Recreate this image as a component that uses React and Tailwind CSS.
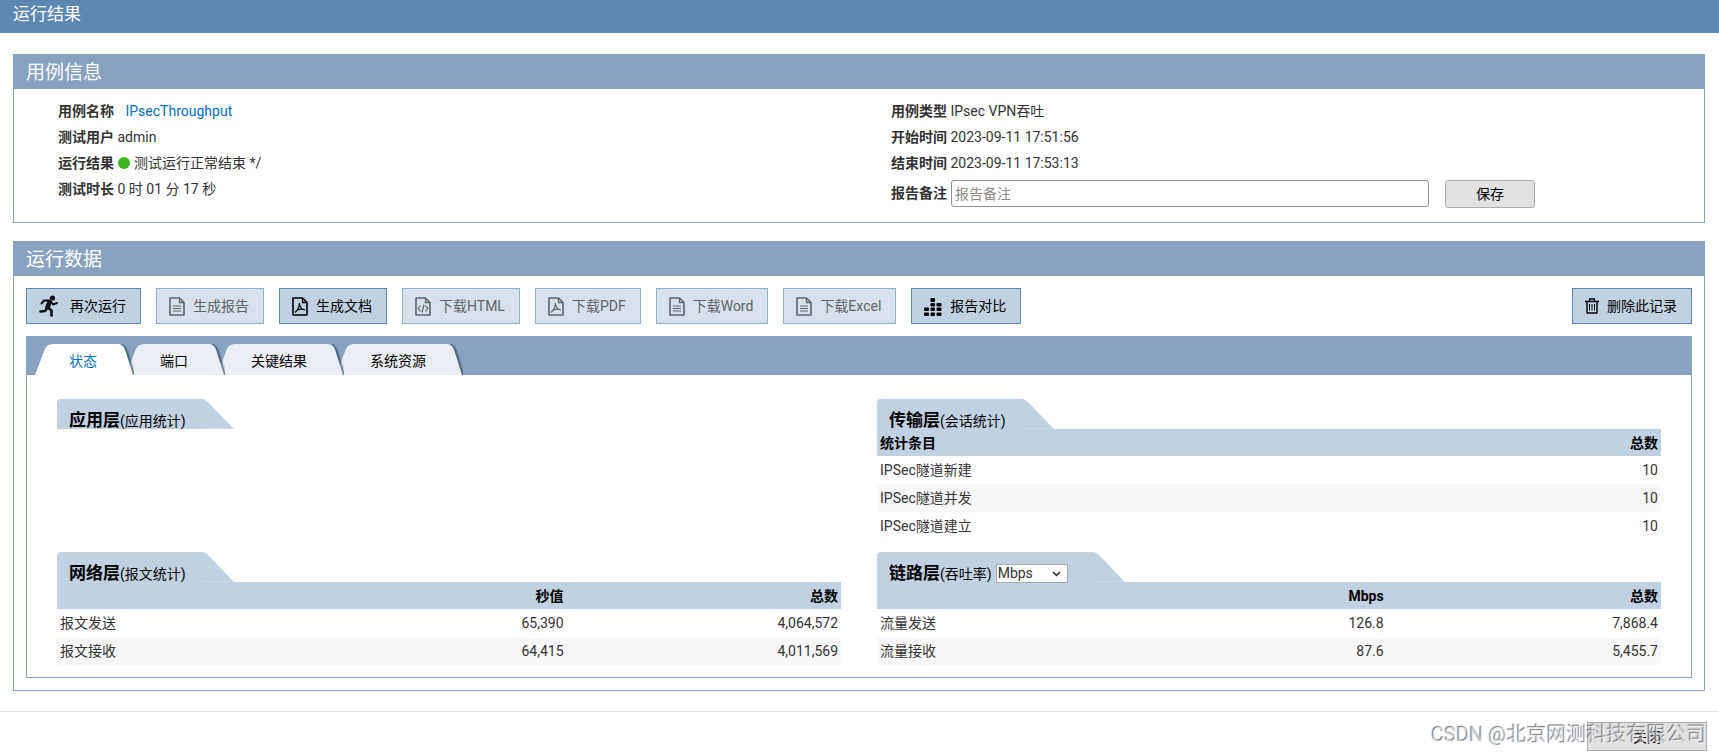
import {useState} from 'react'

const tabs = ['状态', '端口', '关键结果', '系统资源']
const tabLayers = ['z-40', 'z-30', 'z-20', 'z-10']

const actions = [
    {label: '再次运行', icon: <RunIcon/>, gap: 'gap-[11px]'},
    {label: '生成报告', icon: <FileIcon type="text"/>, disabled: true},
    {label: '生成文档', icon: <FileIcon type="pdf"/>},
    {label: '下载HTML', icon: <FileIcon type="code"/>, disabled: true},
    {label: '下载PDF', icon: <FileIcon type="pdf"/>, disabled: true},
    {label: '下载Word', icon: <FileIcon type="text"/>, disabled: true},
    {label: '下载Excel', icon: <FileIcon type="text"/>, disabled: true},
    {label: '报告对比', icon: <CompareIcon/>},
]

function RunIcon() {
    return (
        <svg width="20" height="22" viewBox="0 0 20 22" fill="none" stroke="#0b0f12" strokeLinecap="round" strokeLinejoin="round">
            <circle cx="13.500" cy="3" r="2.6" fill="#0b0f12" stroke="none"/>
            <path d="M10.500 7 L8.500 12.500" strokeWidth="4.6"/>
            <path d="M10 5.500 L5 5.500 L2.500 8.500" strokeWidth="2"/>
            <path d="M12 6.500 L14 9.500 L18 8" strokeWidth="2"/>
            <path d="M8 13 L6 16 L1.500 16.500" strokeWidth="2.600"/>
            <path d="M9 12.500 L12.500 15.500 L12.500 20.500" strokeWidth="2.600"/>
        </svg>
    )
}

function FileIcon({type}) {
    return (
        <svg width="16" height="19" viewBox="0 0 16 19" fill="none" stroke="currentColor">
            <path d="M1 1 H10.500 L15 5.500 V18 H1 Z" strokeWidth="1.600" strokeLinejoin="round"/>
            <path d="M10.500 1 V5.500 H15" strokeWidth="1.300"/>
            {type === 'text' && <path d="M4 9 H12 M4 11.500 H12 M4 14 H12" strokeWidth="1.200"/>}
            {type === 'code' && <path d="M5.500 8.500 L3.200 11.500 L5.500 14.500 M10.500 8.500 L12.800 11.500 L10.500 14.500 M9 7.500 L7 15.500" strokeWidth="1.200"/>}
            {type === 'pdf' && <path d="M7.500 6 C7.300 10 6 13 3 15.500 M7.500 7 C8 10 9.500 12.500 13 13 M5.500 13 C7.500 12 10 12 12.500 12.600" strokeWidth="1.200"/>}
        </svg>
    )
}

function CompareIcon() {
    return (
        <svg width="18" height="20" viewBox="0 -2 18 20" fill="#000">
            <rect x="0" y="9.500" width="5" height="3.500" rx="1"/>
            <rect x="0" y="14.500" width="5" height="3.500" rx="1"/>
            <rect x="6.500" y="0" width="4.500" height="4" rx="1"/>
            <rect x="6.500" y="5" width="4.500" height="3.500" rx="1"/>
            <rect x="6.500" y="9.500" width="4.500" height="3.500" rx="1"/>
            <rect x="6.500" y="14.500" width="4.500" height="3.500" rx="1"/>
            <rect x="12.500" y="5" width="5" height="3.500" rx="1"/>
            <rect x="12.500" y="9.500" width="5" height="3.500" rx="1"/>
            <rect x="12.500" y="14.500" width="5" height="3.500" rx="1"/>
        </svg>
    )
}

function TrashIcon() {
    return (
        <svg width="14" height="16" viewBox="0 0 14 16" fill="none" stroke="#000">
            <path d="M0 3.500 H14" strokeWidth="1.400"/>
            <path d="M4.500 3 V1 H9.500 V3" strokeWidth="1.300"/>
            <path d="M2 3.500 V15 H12 V3.500" strokeWidth="1.400" strokeLinejoin="round"/>
            <path d="M4.500 6 V12.500 M7 6 V12.500 M9.500 6 V12.500" strokeWidth="1"/>
        </svg>
    )
}

function ActionButton({label, icon, disabled, gap = 'gap-2'}) {
    return (
        <button
            type="button"
            disabled={disabled}
            className={`flex h-9 items-center border pl-3 pr-[14px] ${gap} ${
                disabled
                    ? 'border-[#92b0d0] bg-[#d8e1eb] text-[#606468]'
                    : 'border-[#5c87b0] bg-[#c2d1e1] text-black'
            }`}
        >
            {icon}
            <span>{label}</span>
        </button>
    )
}

function Panel({title, children}) {
    return (
        <section className="ml-[13px] mr-[14px] border border-[#87a3c1]">
            <h2 className="h-[34px] bg-[#87a3c1] px-3 text-[19px] leading-[36px] text-white">{title}</h2>
            {children}
        </section>
    )
}

function Tab({label, active, layer, onClick}) {
    return (
        <button
            type="button"
            role="tab"
            aria-selected={active}
            onClick={onClick}
            className={`relative -mr-2 flex h-[31px] items-stretch ${layer} ${active ? 'text-[#0070c0]' : 'text-black'}`}
        >
            <svg width="18" height="31" viewBox="0 0 18 31" fill={active ? '#fff' : '#ebeef4'}>
                <path d="M0 31 L9.500 6 Q11.500 0 18 0 V31 Z"/>
            </svg>
            <span className={`pl-4 pr-[19px] leading-[35px] ${active ? 'bg-white' : 'bg-[#ebeef4]'}`}>{label}</span>
            <svg width="18" height="31" viewBox="0 0 18 31" fill={active ? '#fff' : '#ebeef4'}>
                <path d="M5 1 Q9 2 11 8 L18.500 31" fill="none" stroke="#27415c" strokeWidth="4" opacity=".2"/>
                <path d="M5 1 Q8.500 2 10.500 8 L17.500 31" fill="none" stroke="#27415c" strokeWidth="2.500" opacity=".5"/>
                <path d="M0 0 H2 Q7.500 0 9.500 7 L17 31 H0 Z"/>
            </svg>
        </button>
    )
}

function Layer({title, note, control, columns, rows}) {
    return (
        <div>
            <div className="flex h-[30px]">
                <h3 className={`flex items-center gap-1 rounded-tl bg-[#c2d1e1] pl-3 pt-3 text-black ${control ? 'w-[216px]' : 'w-[145px]'}`}>
                    <span className="whitespace-nowrap leading-[18px]">
                        <b className="text-[17px]">{title}</b>({note})
                    </span>
                    {control}
                </h3>
                <svg width="32" height="30" viewBox="0 0 32 30">
                    <path d="M0 0 Q3 0 5.500 2.500 L32 30 H0 Z" fill="#c2d1e1"/>
                    <path d="M0 29.500 H32" stroke="#cddbe9"/>
                </svg>
            </div>
            {columns && (
                <table className="w-full table-fixed border-collapse">
                    <thead>
                        <tr className="h-[27px] bg-[#c2d1e1] text-black">
                            {columns.map((c, i) => (
                                <th key={i} className={`px-[3px] font-bold ${
                                    i === 0 ? 'text-left' : 'text-right'
                                } ${columns.length === 3 && i === 0 ? 'w-[30%]' : ''}`}>{c}</th>
                            ))}
                        </tr>
                    </thead>
                    <tbody>
                        {rows.map(row => (
                            <tr key={row[0]} className="h-7 even:bg-[#f8f8f8]">
                                {row.map((cell, i) => (
                                    <td key={i} className={`px-[3px] ${i === 0 ? 'text-left' : 'text-right'}`}>{cell}</td>
                                ))}
                            </tr>
                        ))}
                    </tbody>
                </table>
            )}
        </div>
    )
}

function UnitSelect({value, onChange}) {
    return (
        <span className="relative">
            <select
                aria-label="吞吐率单位"
                value={value}
                onChange={e => onChange(e.target.value)}
                className="block h-[19px] w-[72px] appearance-none border border-[#a9a9a9] bg-white pl-px text-sm leading-[17px] text-[#333]"
            >
                <option>Mbps</option>
                <option>Kbps</option>
            </select>
            <svg className="pointer-events-none absolute right-[7px] top-[7px]" width="9" height="6" viewBox="0 0 9 6" fill="none" stroke="#222" strokeWidth="1.500">
                <path d="M1 1 L4.500 4.500 L8 1"/>
            </svg>
        </span>
    )
}

export default function App() {
    const [active, setActive] = useState(0)
    const [unit, setUnit] = useState('Mbps')

    return (
        <div className="bg-white font-['Roboto','Noto_Sans_CJK_SC',sans-serif] text-sm text-[#333]">
            <header className="h-[33px] bg-[#5c87b0] px-[13px]">
                <h1 className="text-[17px] leading-[29px] text-white">运行结果</h1>
            </header>

            <main className="flex flex-col gap-[18px] pt-[21px]">
                <Panel title="用例信息">
                    <div className="grid grid-cols-2 pb-[10px] pt-[9px]">
                        <div className="pl-11 leading-[26px]">
                            <p><b>用例名称</b> <a href="#case" className="ml-2 text-[#0070c0]">IPsecThroughput</a></p>
                            <p><b>测试用户</b> admin</p>
                            <p className="flex items-center gap-1">
                                <b>运行结果</b>
                                <span className="size-3 rounded-full bg-[#3eb61b]"></span>
                                <span>测试运行正常结束 */</span>
                            </p>
                            <p><b>测试时长</b> 0 时 01 分 17 秒</p>
                        </div>
                        <div className="pl-8 leading-[26px]">
                            <p><b>用例类型</b> IPsec VPN吞吐</p>
                            <p><b>开始时间</b> 2023-09-11 17:51:56</p>
                            <p><b>结束时间</b> 2023-09-11 17:53:13</p>
                            <div className="flex h-9 items-start pt-1">
                                <label htmlFor="remark" className="mr-1 font-bold">报告备注</label>
                                <input
                                    id="remark"
                                    type="text"
                                    placeholder="报告备注"
                                    className="h-[27px] w-[478px] rounded-[3px] border border-[#8f8f9d] px-[3px] placeholder:text-[#8c8c8c]"
                                />
                                <button type="button" className="ml-4 h-7 w-[90px] rounded-[3px] border border-[#adadad] bg-[#e1e1e1] text-black">保存</button>
                            </div>
                        </div>
                    </div>
                </Panel>

                <Panel title="运行数据">
                    <div className="p-3">
                        <div className="flex gap-[15px]">
                            {actions.map(a => <ActionButton key={a.label} {...a}/>)}
                            <div className="ml-auto">
                                <ActionButton label="删除此记录" icon={<TrashIcon/>}/>
                            </div>
                        </div>

                        {/* Tabs */}
                        <div className="mt-3 border border-[#87a3c1]">
                            <div role="tablist" className="flex bg-[#87a3c1] pl-2 pt-[7px]">
                                {tabs.map((t, i) => (
                                    <Tab key={t} label={t} layer={tabLayers[i]} active={i === active} onClick={() => setActive(i)}/>
                                ))}
                            </div>

                            <div className="grid grid-cols-2 gap-x-9 gap-y-3 px-[30px] pb-3 pt-6">
                                <Layer title="应用层" note="应用统计"/>
                                <Layer
                                    title="传输层"
                                    note="会话统计"
                                    columns={['统计条目', '总数']}
                                    rows={[['IPSec隧道新建', '10'], ['IPSec隧道并发', '10'], ['IPSec隧道建立', '10']]}
                                />
                                <Layer
                                    title="网络层"
                                    note="报文统计"
                                    columns={['', '秒值', '总数']}
                                    rows={[['报文发送', '65,390', '4,064,572'], ['报文接收', '64,415', '4,011,569']]}
                                />
                                <Layer
                                    title="链路层"
                                    note="吞吐率"
                                    control={<UnitSelect value={unit} onChange={setUnit}/>}
                                    columns={['', unit, '总数']}
                                    rows={[['流量发送', '126.8', '7,868.4'], ['流量接收', '87.6', '5,455.7']]}
                                />
                            </div>
                        </div>
                    </div>
                </Panel>
            </main>

            <footer className="relative mt-5 flex justify-end border-t border-[#e0e0e0] px-3 pb-0.5 pt-[10px]">
                <button type="button" className="h-[29px] w-[120px] border border-[#adadad] bg-[#e1e1e1] text-black">关闭</button>
                <span className="pointer-events-none absolute right-3 top-[9px] text-[20px] leading-[28px] text-white/60 [text-shadow:-1px_-1px_1px_#777]">CSDN @北京网测科技有限公司</span>
            </footer>
        </div>
    )
}
